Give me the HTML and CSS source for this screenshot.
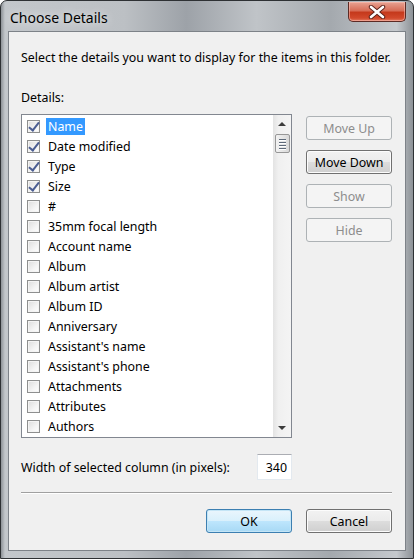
FILE: index.html
```html
<!DOCTYPE html>
<html lang="en">
<head>
    <meta charset="UTF-8">
    <meta name="viewport" content="width=device-width, initial-scale=1.0">
    <title>Choose Details</title>
    <link rel="stylesheet" href="styles.css">
</head>
<body>
    <div class="window">
        <div class="titlebar">
            <span class="title">Choose Details</span>
            <div class="close-btn">
                <svg width="18" height="14" viewBox="0 0 18 14">
                    <path d="M3 2 L15 12 M15 2 L3 12" stroke="#5a2018" stroke-width="4.4" stroke-linecap="round"/>
                    <path d="M3 2 L15 12 M15 2 L3 12" stroke="#ffffff" stroke-width="2.6" stroke-linecap="round"/>
                </svg>
            </div>
        </div>

        <div class="client">
            <p class="intro">Select the details you want to display for the items in this folder.</p>
            <p class="label">Details:</p>

            <div class="details-row">
                <div class="listbox">
                    <ul class="items">
                        <li class="checked"><span class="check"></span><span class="name selected">Name</span></li>
                        <li class="checked"><span class="check"></span><span class="name">Date modified</span></li>
                        <li class="checked"><span class="check"></span><span class="name">Type</span></li>
                        <li class="checked"><span class="check"></span><span class="name">Size</span></li>
                        <li><span class="check"></span><span class="name">#</span></li>
                        <li><span class="check"></span><span class="name">35mm focal length</span></li>
                        <li><span class="check"></span><span class="name">Account name</span></li>
                        <li><span class="check"></span><span class="name">Album</span></li>
                        <li><span class="check"></span><span class="name">Album artist</span></li>
                        <li><span class="check"></span><span class="name">Album ID</span></li>
                        <li><span class="check"></span><span class="name">Anniversary</span></li>
                        <li><span class="check"></span><span class="name">Assistant's name</span></li>
                        <li><span class="check"></span><span class="name">Assistant's phone</span></li>
                        <li><span class="check"></span><span class="name">Attachments</span></li>
                        <li><span class="check"></span><span class="name">Attributes</span></li>
                        <li><span class="check"></span><span class="name">Authors</span></li>
                    </ul>
                    <div class="scrollbar">
                        <span class="arrow up"></span>
                        <div class="thumb">
                            <span></span><span></span><span></span><span></span>
                        </div>
                        <div class="track"></div>
                        <span class="arrow down"></span>
                    </div>
                </div>

                <div class="side-buttons">
                    <button class="btn" disabled>Move Up</button>
                    <button class="btn">Move Down</button>
                    <button class="btn" disabled>Show</button>
                    <button class="btn" disabled>Hide</button>
                </div>
            </div>

            <div class="width-row">
                <span>Width of selected column (in pixels):</span>
                <input class="width-input" type="text" value="340">
            </div>

            <div class="separator"></div>

            <div class="footer">
                <button class="btn default">OK</button>
                <button class="btn">Cancel</button>
            </div>
        </div>
    </div>
</body>
</html>
```

FILE: styles.css
```css
body {
    margin: 0;
    padding: 0;
    width: 414px;
    height: 559px;
    overflow: hidden;
    background-color: #ffffff;
    font-family: "Segoe UI", "Noto Sans", sans-serif;
    font-size: 12.4px;
    color: #000;
}

.window {
    box-sizing: border-box;
    width: 414px;
    height: 559px;
    border: 1px solid #2e3134;
    border-radius: 7px 7px 0 0;
    background: linear-gradient(to right, #8d9297 0, #c3c7cb 4px, #bcc0c4 30%, #9da2a8 45%, #c0c4c8 62%, #a4a9ae 80%, #c5c9cd 96%, #8d9297 100%);
    padding: 0 7px 7px;
    display: flex;
    flex-direction: column;
}

.titlebar {
    height: 30px;
    display: flex;
    justify-content: space-between;
    align-items: flex-start;
}

.title {
    font-size: 14px;
    margin: 7px 0 0 2px;
    color: #000;
    text-shadow: 0 0 8px rgba(255, 255, 255, 0.9);
}

.close-btn {
    width: 56px;
    height: 19px;
    margin: 1px 0 0;
    border: 1px solid #5c2a24;
    border-top: none;
    border-radius: 0 0 5px 5px;
    background: linear-gradient(to bottom, #e8a393 0%, #d76d57 45%, #c5391c 55%, #d2492c 85%, #e27c63 100%);
    box-shadow: inset 0 0 0 1px rgba(255, 200, 190, 0.5);
    display: flex;
    justify-content: center;
    align-items: center;
}

.client {
    flex: 1;
    background-color: #f0f0f0;
    border: 1px solid #7d8288;
    padding: 0 13px 0 12px;
    display: flex;
    flex-direction: column;
}

.intro {
    margin: 18px 0 0;
    line-height: 16px;
}

.label {
    margin: 24px 0 0;
    line-height: 16px;
}

.details-row {
    display: flex;
    gap: 14px;
    margin-top: 8px;
}

.listbox {
    box-sizing: border-box;
    width: 272px;
    height: 324px;
    border: 1px solid #828790;
    background-color: #fff;
    display: flex;
}

.items {
    flex: 1;
    list-style: none;
    margin: 0;
    padding: 1px 0 0;
}

.items li {
    height: 20px;
    display: flex;
    align-items: center;
}

.check {
    box-sizing: border-box;
    width: 13px;
    height: 13px;
    margin: 0 6px 0 5px;
    border: 1px solid #8e8f8f;
    background: linear-gradient(135deg, #dcdcdc 0%, #f4f4f4 60%, #ffffff 100%);
    box-shadow: inset 0 0 0 1px #f4f4f4;
    position: relative;
}

.checked .check::after {
    content: "";
    position: absolute;
    left: 3px;
    top: -1px;
    width: 4px;
    height: 9px;
    border: solid #4a5d92;
    border-width: 0 2px 2px 0;
    transform: rotate(38deg);
}

.name {
    padding: 0 2px;
    line-height: 17px;
}

.name.selected {
    background-color: #3399ff;
    color: #fff;
}

.scrollbar {
    width: 18px;
    background: linear-gradient(to right, #e3e3e3, #f0f0f0 30%, #f4f4f4);
    display: flex;
    flex-direction: column;
    align-items: center;
}

.arrow {
    width: 0;
    height: 0;
    border-left: 4px solid transparent;
    border-right: 4px solid transparent;
    margin: 7px 0;
}

.arrow.up {
    border-bottom: 4px solid #3c3c3c;
}

.arrow.down {
    border-top: 4px solid #3c3c3c;
}

.thumb {
    box-sizing: border-box;
    width: 15px;
    height: 19px;
    margin-top: 1px;
    border: 1px solid #979797;
    border-radius: 2px;
    background: linear-gradient(to right, #f2f2f2, #e6e6e6 50%, #d8d8d8);
    display: flex;
    flex-direction: column;
    justify-content: center;
    align-items: center;
    gap: 2px;
}

.thumb span {
    width: 7px;
    height: 1px;
    background-color: #5e6a7a;
    box-shadow: 0 1px 0 #ffffff;
}

.track {
    flex: 1;
}

.side-buttons {
    display: flex;
    flex-direction: column;
    gap: 10px;
    padding-top: 2px;
}

.btn {
    box-sizing: border-box;
    width: 86px;
    height: 24px;
    padding: 0;
    border: 1px solid #707070;
    border-radius: 3px;
    background: linear-gradient(to bottom, #f2f2f2 0%, #ebebeb 49%, #dddddd 50%, #cfcfcf 100%);
    box-shadow: inset 0 0 0 1px #fcfcfc;
    font-family: inherit;
    font-size: 12.4px;
    color: #000;
}

.btn:disabled {
    border-color: #adb2b5;
    background: #f4f4f4;
    box-shadow: none;
    color: #8d8d8d;
}

.btn.default {
    border-color: #3c7fb1;
    background: linear-gradient(to bottom, #eaf6fd 0%, #d9f0fc 49%, #bee6fd 50%, #a7d9f5 100%);
    box-shadow: inset 0 0 0 1px #c4e5f6;
}

.width-row {
    display: flex;
    align-items: center;
    justify-content: space-between;
    margin-top: 16px;
    width: 271px;
}

.width-input {
    box-sizing: border-box;
    width: 35px;
    height: 26px;
    border: 1px solid #e3e9ef;
    border-top-color: #abadb3;
    background: #fff;
    padding: 0 4px;
    text-align: right;
    font-family: inherit;
    font-size: 12.4px;
    color: #000;
}

.separator {
    margin-top: 12px;
    border-top: 1px solid #a0a0a0;
    border-bottom: 1px solid #ffffff;
    height: 0;
}

.footer {
    display: flex;
    justify-content: flex-end;
    gap: 14px;
    margin-top: 15px;
}
```
